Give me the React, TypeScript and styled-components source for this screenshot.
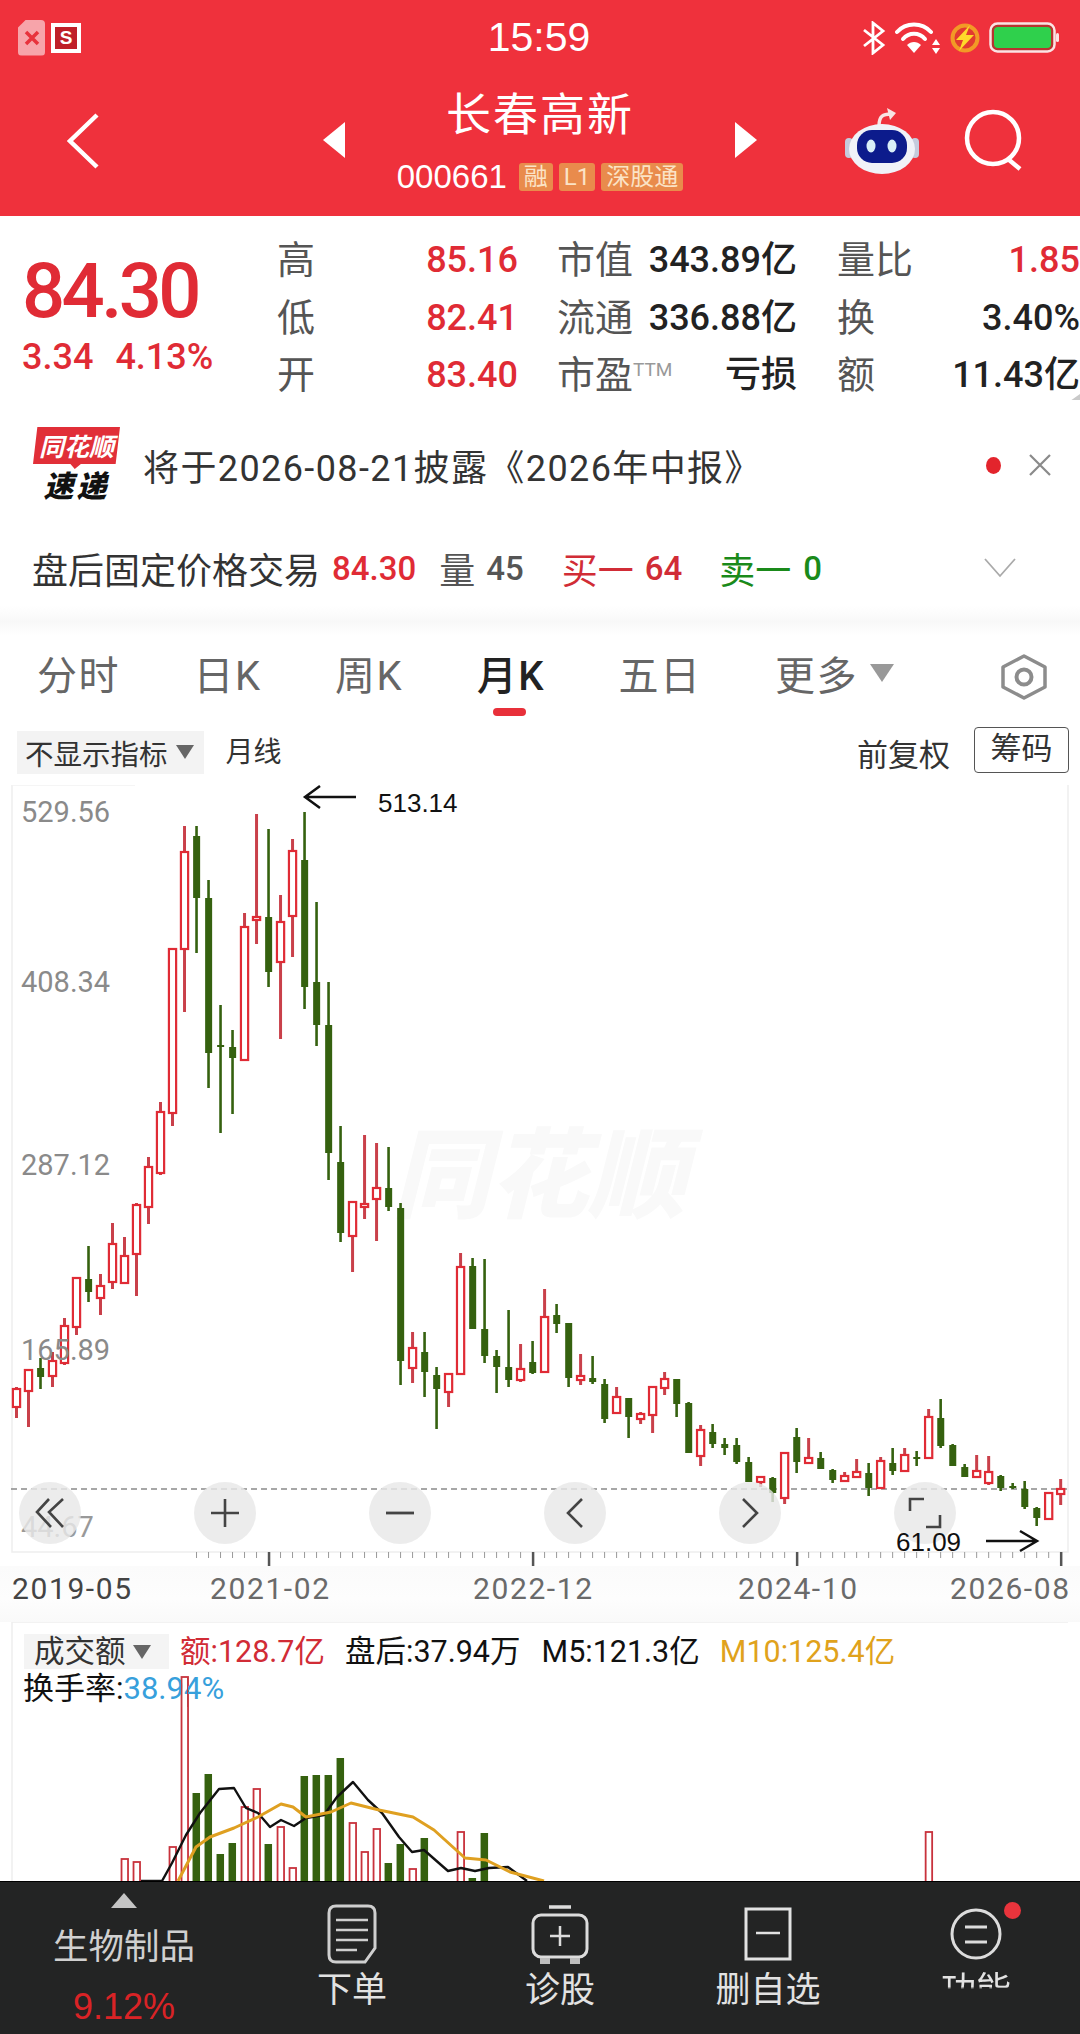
import React from "react";
import styled, { createGlobalStyle } from "styled-components";

const LATIN = `Roboto, "Noto Sans CJK SC", sans-serif`;

const GlobalStyle = createGlobalStyle`
  html, body {
    margin: 0;
    padding: 0;
    background: #fff;
    font-family: ${LATIN};
  }
`;

const RED = "#e02b35";
const GREEN = "#35610f";

// i -> [high, bodyTop, bodyBottom, low, up]
const CANDLES: [number, number, number, number, 0 | 1][] = [
  [1387, 1389, 1407, 1418, 1], [1369, 1370, 1391, 1427, 1], [1358, 1368, 1377, 1389, 0], [1352, 1361, 1376, 1387, 1],
  [1318, 1326, 1363, 1365, 1], [1277, 1278, 1327, 1335, 1], [1246, 1279, 1292, 1302, 0], [1274, 1286, 1298, 1315, 1],
  [1223, 1244, 1282, 1289, 1], [1237, 1256, 1283, 1284, 1], [1203, 1205, 1254, 1296, 1], [1157, 1167, 1207, 1224, 1],
  [1102, 1112, 1173, 1175, 1], [949, 949, 1113, 1126, 1], [826, 852, 949, 1012, 1], [826, 836, 898, 953, 0],
  [880, 898, 1053, 1088, 0], [1005, 1045, 1047, 1133, 0], [1030, 1047, 1058, 1114, 0], [913, 927, 1060, 1060, 1],
  [814, 917, 920, 944, 1], [829, 917, 972, 987, 0], [895, 922, 962, 1039, 1], [839, 851, 916, 957, 1],
  [812, 860, 987, 1009, 0], [902, 982, 1025, 1046, 0], [982, 1025, 1153, 1180, 0], [1126, 1162, 1233, 1242, 0],
  [1201, 1202, 1236, 1272, 1], [1135, 1204, 1207, 1219, 1], [1143, 1188, 1199, 1241, 1], [1147, 1188, 1207, 1211, 0],
  [1203, 1208, 1361, 1385, 0], [1332, 1348, 1368, 1383, 1], [1332, 1352, 1372, 1397, 0], [1367, 1375, 1389, 1429, 0],
  [1374, 1374, 1392, 1407, 1], [1253, 1267, 1374, 1374, 1], [1258, 1266, 1329, 1329, 0], [1259, 1329, 1356, 1363, 0],
  [1350, 1356, 1367, 1393, 0], [1310, 1367, 1380, 1387, 0], [1344, 1369, 1380, 1382, 1], [1341, 1362, 1373, 1374, 0],
  [1289, 1317, 1372, 1372, 1], [1304, 1315, 1324, 1333, 0], [1323, 1323, 1378, 1387, 0], [1354, 1376, 1380, 1385, 1],
  [1356, 1378, 1382, 1384, 0], [1379, 1384, 1419, 1423, 0], [1387, 1397, 1413, 1413, 1], [1398, 1398, 1417, 1438, 0],
  [1412, 1414, 1419, 1424, 1], [1386, 1387, 1415, 1433, 1], [1372, 1379, 1388, 1395, 1], [1379, 1379, 1404, 1417, 0],
  [1402, 1403, 1453, 1453, 0], [1425, 1430, 1456, 1466, 1], [1424, 1432, 1444, 1448, 0], [1438, 1444, 1448, 1455, 0],
  [1438, 1445, 1462, 1464, 0], [1457, 1462, 1482, 1482, 0], [1476, 1477, 1482, 1487, 1], [1477, 1478, 1493, 1502, 0],
  [1453, 1453, 1498, 1504, 1], [1428, 1437, 1462, 1473, 0], [1438, 1458, 1463, 1463, 1], [1452, 1458, 1469, 1469, 0],
  [1469, 1470, 1480, 1483, 0], [1472, 1476, 1481, 1481, 1], [1459, 1472, 1477, 1477, 1], [1463, 1473, 1488, 1496, 0],
  [1457, 1461, 1488, 1488, 1], [1448, 1463, 1471, 1475, 0], [1448, 1455, 1471, 1471, 1], [1451, 1457, 1459, 1466, 0],
  [1409, 1417, 1458, 1458, 1], [1399, 1418, 1446, 1448, 0], [1444, 1445, 1466, 1466, 0], [1464, 1467, 1477, 1477, 0],
  [1455, 1471, 1477, 1477, 1], [1456, 1472, 1483, 1485, 1], [1475, 1476, 1488, 1491, 0], [1483, 1486, 1488, 1489, 0],
  [1481, 1489, 1507, 1509, 0], [1507, 1508, 1518, 1526, 0], [1492, 1493, 1519, 1520, 1], [1479, 1489, 1494, 1505, 1],
];

// [candle index, bar top, up]
const VOLUMES: [number, number, 0 | 1][] = [
  [9, 1859, 1], [10, 1862, 1], [13, 1847, 1], [14, 1677, 1], [15, 1793, 0], [16, 1774, 0], [17, 1854, 0],
  [18, 1843, 0], [19, 1807, 1], [20, 1789, 1], [21, 1844, 0], [22, 1827, 1], [23, 1868, 1], [24, 1776, 0],
  [25, 1775, 0], [26, 1775, 0], [27, 1758, 0], [28, 1823, 1], [29, 1852, 1], [30, 1829, 1], [31, 1863, 0],
  [32, 1844, 0], [33, 1869, 1], [34, 1838, 0], [37, 1832, 1], [38, 1878, 0], [39, 1833, 0], [76, 1832, 1],
];

const M5_LINE =
  "141,1881 162,1881 172,1863 186,1835 200,1813 219,1789 234,1788 246,1808 258,1813 270,1827 281,1820 294,1826 306,1818 324,1815 337,1797 353,1782 368,1800 382,1813 399,1837 412,1852 424,1850 448,1871 461,1868 475,1871 489,1868 508,1867 527,1881";
const M10_LINE =
  "178,1881 196,1847 210,1837 234,1828 258,1817 281,1804 293,1807 306,1817 331,1812 351,1803 379,1810 413,1817 434,1830 465,1858 486,1860 510,1872 544,1881";

const candleX = (i: number) => 16.5 + i * 12.002;

const Page = styled.div`
  width: 1080px;
  height: 2034px;
  overflow: hidden;
  position: relative;
  display: flex;
  flex-direction: column;
  background: #fff;
  color: #222;
`;

/* header */
const Header = styled.header`
  flex: none;
  height: 216px;
  background: #ef313c;
  color: #fff;
`;

const StatusBar = styled.div`
  height: 75px;
  padding: 0 20px 0 18px;
  display: grid;
  grid-template-columns: 1fr auto 1fr;
  align-items: center;
  box-sizing: border-box;
`;

const StatusLeft = styled.div`
  display: flex;
  align-items: center;
  gap: 6px;
`;

const StatusRight = styled.div`
  display: flex;
  align-items: center;
  justify-content: flex-end;
  gap: 9px;
`;

const CloseTile = styled.div`
  width: 27px;
  height: 36px;
  border-radius: 4px;
  background: #f7a4aa;
  clip-path: polygon(30% 0, 100% 0, 100% 100%, 0 100%, 0 22%);
  display: flex;
  align-items: center;
  justify-content: center;
`;

const SimBox = styled.div`
  width: 22px;
  height: 22px;
  border: 4px solid #fff;
  background: #bf1f28;
  color: #fff;
  font: 700 19px/22px "Liberation Sans", sans-serif;
  text-align: center;
`;

const Clock = styled.div`
  font: 400 41px/1 "Liberation Sans", sans-serif;
`;

const NavBar = styled.div`
  height: 141px;
  padding: 0 56px;
  display: grid;
  grid-template-columns: 1fr 435px 1fr;
  align-items: start;
`;

const NavCenter = styled.div`
  display: flex;
  align-items: center;
  justify-content: space-between;
  height: 141px;
  padding-bottom: 12px;
  box-sizing: border-box;
`;

const TitleBlock = styled.div`
  display: flex;
  flex-direction: column;
  align-items: center;
  gap: 17px;
  margin-top: 0;
`;

const Title = styled.div`
  font-size: 45px;
  line-height: 58px;
  letter-spacing: 2px;
  height: 58px;
`;

const CodeRow = styled.div`
  display: flex;
  align-items: center;
  gap: 6px;
  height: 30px;
`;

const Code = styled.span`
  font: 400 33px/30px "Liberation Sans", sans-serif;
  margin-right: 6px;
`;

const Tag = styled.span`
  height: 28px;
  padding: 0 5px;
  border-radius: 3px;
  background: #e98b4c;
  color: #fbe3c6;
  font-size: 24px;
  line-height: 28px;
`;

const NavRight = styled.div`
  display: flex;
  justify-content: flex-end;
  align-items: center;
  gap: 45px;
  padding-top: 31px;
`;

const BackIcon = styled.svg`
  margin: 38px 0 0 11px;
  display: block;
`;

/* quote */
const Quote = styled.section`
  flex: none;
  height: 184px;
  display: flex;
  position: relative;
  overflow: hidden;
`;

const PriceBlock = styled.div`
  flex: none;
  width: 277px;
  box-sizing: border-box;
  padding: 36px 0 0 22px;
  color: ${RED};
`;

const BigPrice = styled.div`
  font: 500 76px/78px ${LATIN};
  letter-spacing: -3.6px;
`;

const PriceChange = styled.div`
  margin-top: 7px;
  font: 500 36px/40px ${LATIN};
  display: flex;
  gap: 22px;
`;

const QuoteGrid = styled.div`
  flex: 1;
  padding-top: 16px;
  display: grid;
  grid-template-columns: 241px 39px 240px 40px 243px;
  grid-template-rows: repeat(3, 57.5px);
`;

const Cell = styled.div<{ $col: number }>`
  grid-column: ${({ $col }) => $col};
  display: flex;
  justify-content: space-between;
  align-items: center;
  white-space: nowrap;
`;

const QLabel = styled.span`
  font-size: 38px;
  line-height: 57px;
  color: #555;
`;

const QValue = styled.span<{ $tone?: "red" | "dark" }>`
  font-size: 36px;
  line-height: 57px;
  font-weight: 500;
  color: ${({ $tone }) => ($tone === "red" ? RED : "#222")};
`;

const Ttm = styled.sup`
  font-size: 19px;
  line-height: 0;
  color: #999;
  vertical-align: 12px;
`;

const CornerMark = styled.div`
  position: absolute;
  right: 0;
  bottom: -8px;
  width: 0;
  height: 0;
  border-left: 20px solid transparent;
  border-bottom: 14px solid #c9c9c9;
`;

/* notice */
const Notice = styled.section`
  flex: none;
  height: 130px;
  padding: 0 28px 0 33px;
  display: flex;
  align-items: center;
  box-sizing: border-box;
`;

const Logo = styled.div`
  flex: none;
  width: 87px;
  display: flex;
  flex-direction: column;
  align-items: center;
  margin: -4px 23px 0 0;
`;

const LogoBubble = styled.div`
  width: 87px;
  height: 42px;
  background: #e12f38;
  color: #fff;
  font: italic 700 25px/37px "Noto Sans CJK SC", sans-serif;
  text-align: center;
  clip-path: polygon(5% 0, 100% 0, 95% 88%, 55% 88%, 48% 100%, 43% 88%, 0 88%);
  white-space: nowrap;
`;

const LogoBottom = styled.div`
  margin-top: 0;
  font: italic 900 30px/30px "Noto Sans CJK SC", sans-serif;
  color: #111;
  letter-spacing: 3px;
`;

const NoticeText = styled.div`
  flex: 1;
  font-size: 36px;
  letter-spacing: 1.4px;
  color: #333;
  white-space: nowrap;
`;

const Dot = styled.div`
  width: 15px;
  height: 17px;
  border-radius: 50%;
  background: #e3242c;
  margin-right: 27px;
`;

/* after hours */
const AfterHours = styled.section`
  flex: none;
  height: 76px;
  padding: 0 64px 0 32px;
  display: flex;
  align-items: center;
  font-size: 36px;
  white-space: nowrap;
  color: #333;
`;

const Ah = styled.span<{ $color?: string; $gap?: number; $bold?: boolean }>`
  color: ${({ $color }) => $color || "inherit"};
  margin-left: ${({ $gap }) => $gap || 0}px;
  font-weight: ${({ $bold }) => ($bold ? 500 : 400)};
  font-size: ${({ $bold }) => ($bold ? 33 : 36)}px;
`;

const Band = styled.div`
  flex: none;
  height: 29px;
  background: linear-gradient(#fff 0%, #f8f8f8 55%, #fff 100%);
`;

/* tabs */
const Tabs = styled.nav`
  flex: none;
  height: 80px;
  padding: 3px 32px 0 37px;
  display: flex;
  align-items: center;
  gap: 73.5px;
  box-sizing: border-box;
`;

const Tab = styled.div<{ $active?: boolean }>`
  position: relative;
  font-size: 40px;
  line-height: 77px;
  letter-spacing: 1.5px;
  color: ${({ $active }) => ($active ? "#222" : "#666")};
  font-weight: ${({ $active }) => ($active ? 500 : 400)};
  white-space: nowrap;
  display: flex;
  align-items: center;
  &::after {
    content: "";
    display: ${({ $active }) => ($active ? "block" : "none")};
    position: absolute;
    left: 16px;
    bottom: -1px;
    width: 33px;
    height: 8px;
    border-radius: 4px;
    background: #e8303a;
  }
`;

const TabCaret = styled.i`
  width: 0;
  height: 0;
  margin: -8px 0 0 12px;
  border-left: 12px solid transparent;
  border-right: 12px solid transparent;
  border-top: 18px solid #999;
`;

const Setting = styled.svg`
  margin-left: auto;
  display: block;
`;

/* chart toolbar */
const ChartBar = styled.div`
  flex: none;
  height: 70px;
  padding: 4px 11px 0 17px;
  display: flex;
  align-items: center;
  box-sizing: border-box;
`;

const IndicatorChip = styled.div`
  height: 43px;
  padding: 0 10px 0 8px;
  display: flex;
  align-items: center;
  gap: 8px;
  background: #f3f3f3;
  font-size: 28.5px;
  color: #333;
  white-space: nowrap;
`;

const ChipCaret = styled.i`
  width: 0;
  height: 0;
  border-left: 9px solid transparent;
  border-right: 9px solid transparent;
  border-top: 14px solid #666;
`;

const ChartBarText = styled.span`
  font-size: 28px;
  color: #333;
  margin-left: 22px;
  margin-top: -4px;
`;

const AdjustText = styled.span`
  margin-left: auto;
  margin-right: 24px;
  font-size: 31px;
  color: #333;
`;

const ChipButton = styled.div`
  width: 95px;
  height: 46px;
  margin-top: -4px;
  box-sizing: border-box;
  border: 1.5px solid #555;
  border-radius: 4px;
  font-size: 31px;
  line-height: 42px;
  text-align: center;
  color: #333;
`;

/* main chart */
const ChartArea = styled.div`
  flex: none;
  position: relative;
  height: 781px;
`;

const ChartSvg = styled.svg`
  display: block;
  position: relative;
`;

const Watermark = styled.div`
  position: absolute;
  left: 392px;
  top: 322px;
  font: italic 900 98px/120px "Noto Sans CJK SC", sans-serif;
  color: #f9f9f9;
  white-space: nowrap;
`;

const PriceLabel = styled.div<{ $y: number; $faded?: boolean }>`
  position: absolute;
  left: 21px;
  top: ${({ $y }) => $y - 785 - 18}px;
  font-size: 29px;
  line-height: 36px;
  color: ${({ $faded }) => ($faded ? "#999" : "#8a8a8a")};
`;

const Annotation = styled.div<{ $x: number; $y: number }>`
  position: absolute;
  left: ${({ $x }) => $x}px;
  top: ${({ $y }) => $y - 785 - 16}px;
  font: 400 26px/32px "Liberation Sans", sans-serif;
  color: #111;
`;

const FloatRow = styled.div`
  position: absolute;
  left: 19px;
  top: 697px;
  display: flex;
  gap: 113px;
`;

const FloatButton = styled.div`
  width: 62px;
  height: 62px;
  border-radius: 50%;
  background: rgba(232, 232, 232, 0.82);
  display: flex;
  align-items: center;
  justify-content: center;
`;

/* date axis */
const Axis = styled.div`
  flex: none;
  height: 56px;
  padding: 5px 0 0 12px;
  box-sizing: border-box;
  display: flex;
  background: linear-gradient(#fbfbfb, #fdfdfd 60%, #f9f9f9);
`;

const AxisDate = styled.span<{ $gap: number; $dark?: boolean }>`
  margin-left: ${({ $gap }) => $gap}px;
  width: 119px;
  font-size: 30px;
  line-height: 36px;
  letter-spacing: 1.6px;
  white-space: nowrap;
  color: ${({ $dark }) => ($dark ? "#444" : "#6a6a6a")};
`;

/* volume */
const Volume = styled.section`
  flex: none;
  position: relative;
  height: 259px;
  overflow: hidden;
`;

const VolumeHead = styled.div`
  position: absolute;
  left: 24px;
  top: 12px;
  display: flex;
  align-items: center;
  font-size: 30.5px;
  line-height: 35px;
  white-space: nowrap;
`;

const VolumeChip = styled.div`
  width: 145px;
  height: 35px;
  margin-right: 11px;
  padding-left: 10px;
  box-sizing: border-box;
  display: flex;
  align-items: center;
  gap: 7px;
  background: #f4f4f4;
  color: #333;
`;

const VolumeValue = styled.span<{ $color: string; $gap?: number }>`
  color: ${({ $color }) => $color};
  margin-left: ${({ $gap }) => $gap || 0}px;
`;

const TurnoverRow = styled.div`
  position: absolute;
  left: 23px;
  top: 49px;
  font-size: 31px;
  line-height: 36px;
  color: #111;
  white-space: nowrap;
`;

const BarOverlay = styled.svg`
  display: block;
`;

const BarRedTip = styled.div`
  position: absolute;
  left: 181px;
  top: 55px;
  width: 7px;
  height: 30px;
  border: solid #c23a42;
  border-width: 0 1.5px;
  box-sizing: border-box;
`;

/* bottom toolbar */
const BottomBar = styled.footer`
  flex: none;
  height: 153px;
  background: #232424;
  border-top: 1px solid #000;
  box-sizing: border-box;
  display: grid;
  grid-template-columns: 248px repeat(4, 208px);
  color: #d8d8d8;
`;

const Sector = styled.div`
  display: flex;
  flex-direction: column;
  align-items: center;
  padding-top: 11px;
`;

const SectorArrow = styled.i`
  width: 0;
  height: 0;
  border-left: 13px solid transparent;
  border-right: 13px solid transparent;
  border-bottom: 15px solid #c4c4c4;
`;

const SectorName = styled.div`
  margin-top: 17px;
  font-size: 35.5px;
  line-height: 44px;
  color: #d0d0d0;
`;

const SectorPct = styled.div`
  margin-top: 16px;
  font: 400 36px/44px "Liberation Sans", sans-serif;
  color: #d92326;
`;

const Action = styled.div`
  position: relative;
  display: flex;
  flex-direction: column;
  align-items: center;
  padding-top: 22px;
`;

const ActionIcon = styled.svg`
  display: block;
  height: 60px;
`;

const ActionLabel = styled.div<{ $fade?: boolean }>`
  margin-top: 5px;
  font-size: 35px;
  line-height: 44px;
  color: #e2e2e2;
  white-space: nowrap;
  ${({ $fade }) =>
    $fade
      ? `-webkit-mask-image: linear-gradient(#000 40%, transparent 46%); mask-image: linear-gradient(#000 40%, transparent 46%);`
      : ""}
`;

const Badge = styled.div`
  position: absolute;
  left: 132px;
  top: 20px;
  width: 17px;
  height: 17px;
  border-radius: 50%;
  background: #e9343c;
`;

const Robot = () => (
  <svg width="74" height="68" viewBox="0 0 74 68">
    <path d="M34 20 C34 10 38 8 46 8" stroke="#f7e4e4" strokeWidth="3.5" fill="none" />
    <path d="M42 2 L51 7 L45 14 Z" fill="#f7e4e4" />
    <rect x="0" y="32" width="8" height="20" rx="4" fill="#c5cbdd" />
    <rect x="66" y="32" width="8" height="20" rx="4" fill="#c5cbdd" />
    <ellipse cx="37" cy="43" rx="33" ry="25" fill="#f0f2f8" />
    <rect x="12" y="24" width="50" height="33" rx="15" fill="#0c1b8c" />
    <ellipse cx="26" cy="40" rx="4.5" ry="6.5" fill="#d9eef8" />
    <ellipse cx="47" cy="40" rx="4.5" ry="6.5" fill="#d9eef8" />
  </svg>
);

const Candles = () => (
  <>
    {CANDLES.map(([hi, top, bottom, lo, up], i) => {
      const x = candleX(i);
      const h = Math.max(bottom - top, 2);
      return (
        <g key={i}>
          <line x1={x} x2={x} y1={hi} y2={top} stroke={up ? "#c9404a" : GREEN} strokeWidth={up ? 3 : 2.6} />
          <line x1={x} x2={x} y1={bottom} y2={lo} stroke={up ? "#c9404a" : GREEN} strokeWidth={up ? 3 : 2.6} />
          {up ? (
            <rect x={x - 3.6} y={top} width={7.2} height={h} fill="#fff" stroke={RED} strokeWidth={2.2} />
          ) : (
            <rect x={x - 3.4} y={top} width={7} height={h} fill={GREEN} />
          )}
        </g>
      );
    })}
  </>
);

const Ticks = () => {
  const ticks = [];
  for (let i = 15; i <= 87; i++) {
    const major = i === 21 || i === 43 || i === 65 || i === 87;
    const x = candleX(i) + (major ? 0.5 : 0);
    ticks.push(
      <line
        key={i}
        x1={x}
        x2={x}
        y1={1552}
        y2={major ? 1566 : 1558}
        stroke={major ? "#555" : "#999"}
        strokeWidth={major ? 2.5 : 1}
      />
    );
  }
  return <>{ticks}</>;
};

export default function App() {
  return (
    <Page>
      <GlobalStyle />
      <Header>
        <StatusBar>
          <StatusLeft>
            <CloseTile>
              <svg width="16" height="16" viewBox="0 0 16 16" stroke="#e8323c" strokeWidth="3.5">
                <path d="M2 2 L14 14 M14 2 L2 14" />
              </svg>
            </CloseTile>
            <SimBox>S</SimBox>
          </StatusLeft>
          <Clock>15:59</Clock>
          <StatusRight>
            <svg width="24" height="34" viewBox="0 0 24 34" fill="none" stroke="#fff" strokeWidth="2.8">
              <path d="M2 9 L21 24 L11 32 V2 L21 10 L2 25" />
            </svg>
            <svg width="46" height="34" viewBox="0 0 46 34" fill="none" stroke="#fff" strokeWidth="4" strokeLinecap="round">
              <path d="M2 11 C11 1 27 1 36 11" />
              <path d="M8 18 C14 11 24 11 30 18" />
              <path d="M19 32 L12 24 C16 20 22 20 26 24 Z" fill="#fff" stroke="none" />
              <path d="M41 18 L45 24 H37 Z M41 33 L45 27 H37 Z" fill="#fff" stroke="none" />
            </svg>
            <svg width="30" height="30" viewBox="0 0 30 30">
              <circle cx="15" cy="15" r="12.5" fill="#e23a30" stroke="#f29a26" strokeWidth="4" />
              <path d="M20 2 L6 17 H13 L9 28 L24 12 H16 Z" fill="#ffd92a" />
            </svg>
            <svg width="71" height="31" viewBox="0 0 71 31">
              <rect x="1.5" y="1.5" width="64" height="28" rx="7" fill="#b8332f" stroke="#fbe4e4" strokeWidth="2.5" />
              <rect x="5" y="5" width="57" height="21" rx="4" fill="#2fd04c" />
              <rect x="67" y="11" width="3" height="9" rx="1.5" fill="#fbe4e4" />
            </svg>
          </StatusRight>
        </StatusBar>
        <NavBar>
          <BackIcon width="32" height="56" viewBox="0 0 32 56" fill="none" stroke="#fff" strokeWidth="4.5">
            <path d="M30 2 L3 28 L30 54" />
          </BackIcon>
          <NavCenter>
            <svg width="22" height="36" viewBox="0 0 22 36">
              <path d="M22 0 V36 L0 18 Z" fill="#fff" />
            </svg>
            <TitleBlock>
              <Title>长春高新</Title>
              <CodeRow>
                <Code>000661</Code>
                <Tag>融</Tag>
                <Tag>L1</Tag>
                <Tag>深股通</Tag>
              </CodeRow>
            </TitleBlock>
            <svg width="22" height="36" viewBox="0 0 22 36">
              <path d="M0 0 V36 L22 18 Z" fill="#fff" />
            </svg>
          </NavCenter>
          <NavRight>
            <Robot />
            <svg width="60" height="62" viewBox="0 0 60 62" fill="none" stroke="#fff" strokeWidth="4.5">
              <circle cx="29" cy="29" r="26" />
              <path d="M44 50 L56 60" />
            </svg>
          </NavRight>
        </NavBar>
      </Header>

      <Quote>
        <PriceBlock>
          <BigPrice>84.30</BigPrice>
          <PriceChange>
            <span>3.34</span>
            <span>4.13%</span>
          </PriceChange>
        </PriceBlock>
        <QuoteGrid>
          <Cell $col={1}><QLabel>高</QLabel><QValue $tone="red">85.16</QValue></Cell>
          <Cell $col={3}><QLabel>市值</QLabel><QValue>343.89亿</QValue></Cell>
          <Cell $col={5}><QLabel>量比</QLabel><QValue $tone="red">1.85</QValue></Cell>
          <Cell $col={1}><QLabel>低</QLabel><QValue $tone="red">82.41</QValue></Cell>
          <Cell $col={3}><QLabel>流通</QLabel><QValue>336.88亿</QValue></Cell>
          <Cell $col={5}><QLabel>换</QLabel><QValue>3.40%</QValue></Cell>
          <Cell $col={1}><QLabel>开</QLabel><QValue $tone="red">83.40</QValue></Cell>
          <Cell $col={3}><QLabel>市盈<Ttm>TTM</Ttm></QLabel><QValue>亏损</QValue></Cell>
          <Cell $col={5}><QLabel>额</QLabel><QValue>11.43亿</QValue></Cell>
        </QuoteGrid>
        <CornerMark />
      </Quote>

      <Notice>
        <Logo>
          <LogoBubble>同花顺</LogoBubble>
          <LogoBottom>速递</LogoBottom>
        </Logo>
        <NoticeText>将于2026-08-21披露《2026年中报》</NoticeText>
        <Dot />
        <svg width="24" height="24" viewBox="0 0 24 24" stroke="#8a8a8a" strokeWidth="2.2">
          <path d="M2 2 L22 22 M22 2 L2 22" />
        </svg>
      </Notice>

      <AfterHours>
        <span>盘后固定价格交易</span>
        <Ah $color={RED} $gap={12} $bold>84.30</Ah>
        <Ah $color="#555" $gap={23}>量</Ah>
        <Ah $color="#555" $gap={11} $bold>45</Ah>
        <Ah $color="#d12c36" $gap={38}>买一</Ah>
        <Ah $color="#d12c36" $gap={11} $bold>64</Ah>
        <Ah $color="#1a8a1a" $gap={37}>卖一</Ah>
        <Ah $color="#1a8a1a" $gap={12} $bold>0</Ah>
        <svg style={{ marginLeft: "auto" }} width="32" height="20" viewBox="0 0 32 20" fill="none" stroke="#aaa" strokeWidth="1.8">
          <path d="M1 1 L16 18 L31 1" />
        </svg>
      </AfterHours>

      <Band />

      <Tabs>
        <Tab>分时</Tab>
        <Tab>日K</Tab>
        <Tab>周K</Tab>
        <Tab $active>月K</Tab>
        <Tab>五日</Tab>
        <Tab>更多<TabCaret /></Tab>
        <Setting width="48" height="46" viewBox="0 0 48 46" fill="none" stroke="#8c8c8c">
          <path d="M24 2 L45 13 V33 L24 44 L3 33 V13 Z" strokeWidth="3.5" strokeLinejoin="round" />
          <circle cx="24" cy="23" r="7.5" strokeWidth="4" />
        </Setting>
      </Tabs>

      <ChartBar>
        <IndicatorChip>不显示指标<ChipCaret /></IndicatorChip>
        <ChartBarText>月线</ChartBarText>
        <AdjustText>前复权</AdjustText>
        <ChipButton>筹码</ChipButton>
      </ChartBar>

      <ChartArea>
        <Watermark>同花顺</Watermark>
        <ChartSvg width="1080" height="781" viewBox="0 785 1080 781">
          <path d="M12 785 V1552 H1068 V785" fill="none" stroke="#eeeeee" strokeWidth="1.5" />
          <path d="M12 785 H135" fill="none" stroke="#f2f2f2" strokeWidth="1.5" />
          <line x1="11" x2="1068" y1="1489" y2="1489" stroke="#8a8a8a" strokeWidth="1.5" strokeDasharray="6 4" />
          <Candles />
          <Ticks />
          <path d="M305 797 H356 M320 786 L305 797 L320 808" fill="none" stroke="#111" strokeWidth="2.5" />
          <path d="M986 1541 H1036 M1020 1531 L1037 1541 L1020 1551" fill="none" stroke="#111" strokeWidth="2.5" />
        </ChartSvg>
        <PriceLabel $y={812}>529.56</PriceLabel>
        <PriceLabel $y={982}>408.34</PriceLabel>
        <PriceLabel $y={1165}>287.12</PriceLabel>
        <PriceLabel $y={1350}>165.89</PriceLabel>
        <PriceLabel $y={1527} $faded>44.67</PriceLabel>
        <FloatRow>
          <FloatButton>
            <svg width="30" height="32" viewBox="0 0 30 32" fill="none" stroke="#444" strokeWidth="2.6">
              <path d="M14 2 L2 15 L16 30 M28 2 L14 15 L28 30" />
            </svg>
          </FloatButton>
          <FloatButton>
            <svg width="30" height="30" viewBox="0 0 30 30" stroke="#444" strokeWidth="2.6">
              <path d="M1 15 H29 M15 1 V29" />
            </svg>
          </FloatButton>
          <FloatButton>
            <svg width="30" height="6" viewBox="0 0 30 6" stroke="#444" strokeWidth="2.8">
              <path d="M1 3 H29" />
            </svg>
          </FloatButton>
          <FloatButton>
            <svg width="18" height="32" viewBox="0 0 18 32" fill="none" stroke="#444" strokeWidth="2.6">
              <path d="M16 2 L2 16 L16 30" />
            </svg>
          </FloatButton>
          <FloatButton>
            <svg width="18" height="32" viewBox="0 0 18 32" fill="none" stroke="#444" strokeWidth="2.6">
              <path d="M2 2 L16 16 L2 30" />
            </svg>
          </FloatButton>
          <FloatButton>
            <svg width="34" height="32" viewBox="0 0 34 32" fill="none" stroke="#444" strokeWidth="2.6">
              <path d="M2 14 V2 H16 M32 18 V30 H18" />
            </svg>
          </FloatButton>
        </FloatRow>
        <Annotation $x={378} $y={803}>513.14</Annotation>
        <Annotation $x={896} $y={1542}>61.09</Annotation>
      </ChartArea>

      <Axis>
        <AxisDate $gap={0} $dark>2019-05</AxisDate>
        <AxisDate $gap={79}>2021-02</AxisDate>
        <AxisDate $gap={144}>2022-12</AxisDate>
        <AxisDate $gap={146}>2024-10</AxisDate>
        <AxisDate $gap={93}>2026-08</AxisDate>
      </Axis>

      <Volume>
        <BarOverlay width="1080" height="259" viewBox="0 1622 1080 259">
          <path d="M12 1881 V1622 H1068" fill="none" stroke="#eeeeee" strokeWidth="1.5" />
          {VOLUMES.map(([i, top, up]) =>
            up ? (
              <rect key={i} x={candleX(i) - 3} y={top} width={6.5} height={1882 - top} fill="#fff" stroke="#c8323c" strokeWidth={1.8} />
            ) : (
              <rect key={i} x={candleX(i) - 4} y={top} width={7.5} height={1881 - top} fill={GREEN} />
            )
          )}
          <polyline points={M5_LINE} fill="none" stroke="#111" strokeWidth="2.4" strokeLinejoin="round" />
          <polyline points={M10_LINE} fill="none" stroke="#dfa021" strokeWidth="3" strokeLinejoin="round" />
        </BarOverlay>
        <VolumeHead>
          <VolumeChip>成交额<ChipCaret /></VolumeChip>
          <VolumeValue $color="#d12c36">额:128.7亿</VolumeValue>
          <VolumeValue $color="#111" $gap={20}>盘后:37.94万</VolumeValue>
          <VolumeValue $color="#111" $gap={21}>M5:121.3亿</VolumeValue>
          <VolumeValue $color="#e0a21c" $gap={20}>M10:125.4亿</VolumeValue>
        </VolumeHead>
        <TurnoverRow>
          换手率:<VolumeValue $color="#37a0dc">38.94%</VolumeValue>
        </TurnoverRow>
        <BarRedTip />
      </Volume>

      <BottomBar>
        <Sector>
          <SectorArrow />
          <SectorName>生物制品</SectorName>
          <SectorPct>9.12%</SectorPct>
        </Sector>
        <Action>
          <ActionIcon width="50" viewBox="0 0 50 60" fill="none" stroke="#cfcfcf" strokeWidth="3">
            <path d="M9 2 H41 Q48 2 48 9 V44 L38 58 H9 Q2 58 2 51 V9 Q2 2 9 2 Z" />
            <path d="M9 16 H41 M9 26 H41 M9 36 H41 M9 46 H30" strokeWidth="2.5" />
          </ActionIcon>
          <ActionLabel>下单</ActionLabel>
        </Action>
        <Action>
          <ActionIcon width="58" viewBox="0 0 58 60" fill="none" stroke="#dcdcdc" strokeWidth="3">
            <path d="M18 3 H40" strokeWidth="3.5" />
            <rect x="2" y="11" width="54" height="42" rx="8" />
            <path d="M29 22 V42 M19 32 H39" strokeWidth="2.5" />
            <path d="M9 57 H19 M39 57 H49" strokeWidth="6" stroke="#bdbdbd" />
          </ActionIcon>
          <ActionLabel>诊股</ActionLabel>
        </Action>
        <Action>
          <ActionIcon width="48" viewBox="0 0 48 60" fill="none" stroke="#e2e2e2" strokeWidth="3">
            <rect x="2" y="5" width="44" height="50" />
            <path d="M12 29 H36" strokeWidth="2.5" />
          </ActionIcon>
          <ActionLabel>删自选</ActionLabel>
        </Action>
        <Action>
          <ActionIcon width="52" viewBox="0 0 52 60" fill="none" stroke="#dcdcdc" strokeWidth="3">
            <circle cx="26" cy="30" r="24" />
            <path d="M15 23 H37 M15 38 H37" strokeWidth="2.8" />
          </ActionIcon>
          <ActionLabel $fade>功能</ActionLabel>
          <Badge />
        </Action>
      </BottomBar>
    </Page>
  );
}
